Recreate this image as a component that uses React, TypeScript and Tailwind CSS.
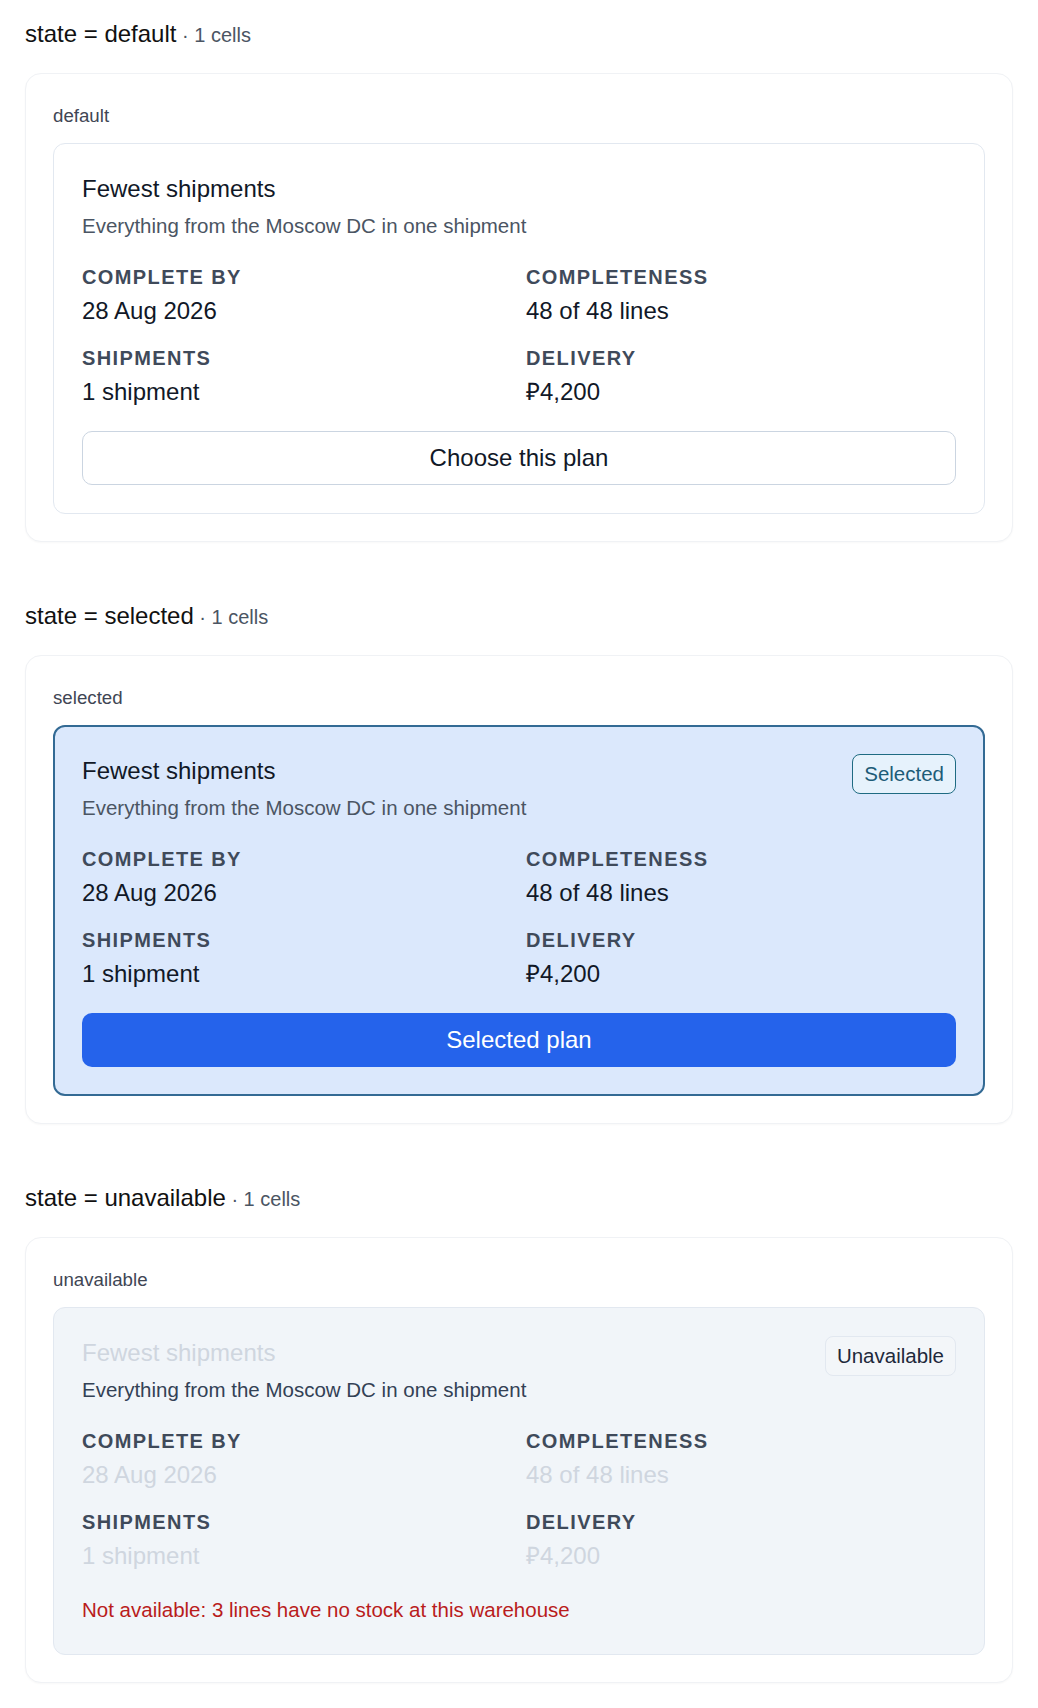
import React from 'react'

type PlanState = 'default' | 'selected' | 'unavailable'

const facts = [
  { label: 'COMPLETE BY', value: '28 Aug 2026' },
  { label: 'COMPLETENESS', value: '48 of 48 lines' },
  { label: 'SHIPMENTS', value: '1 shipment' },
  { label: 'DELIVERY', value: '₽4,200' },
]

function PlanCard({ state }: { state: PlanState }) {
  const selected = state === 'selected'
  const unavailable = state === 'unavailable'

  const cardClass = selected
    ? 'border-2 border-[#336a94] bg-[#dbe8fc] p-[27px]'
    : unavailable
      ? 'border border-[#e2e8f0] bg-[#f1f5f9] p-[28px]'
      : 'border border-[#e2e8f0] bg-white p-[28px]'

  const mutedValue = unavailable ? 'text-[#cfd6df]' : 'text-[#111827]'

  return (
    <div className={`rounded-xl ${cardClass}`}>
      <div className="flex items-start justify-between gap-4">
        <div>
          <div className={`text-[24px] leading-[34px] ${mutedValue}`}>Fewest shipments</div>
          <div className={`mt-[6px] text-[20.5px] leading-[28px] ${unavailable ? 'text-[#334155]' : 'text-[#4b5563]'}`}>
            Everything from the Moscow DC in one shipment
          </div>
        </div>
        {selected && (
          <span className="rounded-lg border border-[#1f6b82] bg-[#e6f2fc] px-[11px] py-[5px] text-[20.5px] leading-[28px] text-[#1d5c78]">
            Selected
          </span>
        )}
        {unavailable && (
          <span className="rounded-lg border border-[#e2e8f0] bg-[#f3f6f9] px-[11px] py-[5px] text-[20.5px] leading-[28px] text-[#1e293b]">
            Unavailable
          </span>
        )}
      </div>

      <div className="mt-[23px] grid grid-cols-2 gap-x-[14px] gap-y-[17px]">
        {facts.map((f) => (
          <div key={f.label}>
            <div className="mb-1 text-[20px] font-bold leading-[28px] tracking-[0.07em] text-[#3f4a5a]">
              {f.label}
            </div>
            <div className={`text-[24px] leading-[32px] ${mutedValue}`}>{f.value}</div>
          </div>
        ))}
      </div>

      {state === 'default' && (
        <button className="mt-[23px] h-[54px] w-full rounded-[10px] border border-[#cbd5e1] bg-white text-[24px] text-[#111827]">
          Choose this plan
        </button>
      )}
      {selected && (
        <button className="mt-[23px] h-[54px] w-full rounded-[10px] bg-[#2563eb] text-[24px] text-white">
          Selected plan
        </button>
      )}
      {unavailable && (
        <div className="mt-6 mb-[2px] text-[20.5px] leading-[28px] text-[#b91c1c]">
          Not available: 3 lines have no stock at this warehouse
        </div>
      )}
    </div>
  )
}

function StateSection({ state }: { state: PlanState }) {
  return (
    <section>
      <h2 className="mb-[22px] text-[24px] font-normal leading-[32px] text-[#111111]">
        state = {state}
        <span className="text-[20px] text-[#4b5563]"> · 1 cells</span>
      </h2>
      <div className="rounded-2xl border border-[#f0f2f5] bg-white px-[27px] pt-[28px] pb-[27px] shadow-[0_1px_2px_rgba(15,23,42,0.03)]">
        <div className="mb-[13px] text-[18.7px] leading-[28px] text-[#3f4654]">{state}</div>
        <PlanCard state={state} />
      </div>
    </section>
  )
}

export default function App() {
  const states: PlanState[] = ['default', 'selected', 'unavailable']
  return (
    <main className="flex min-h-[1708px] flex-col gap-[58px] bg-white px-[25px] pt-[18px] font-['Liberation_Sans',Arial,sans-serif]">
      {states.map((s) => (
        <StateSection key={s} state={s} />
      ))}
    </main>
  )
}
